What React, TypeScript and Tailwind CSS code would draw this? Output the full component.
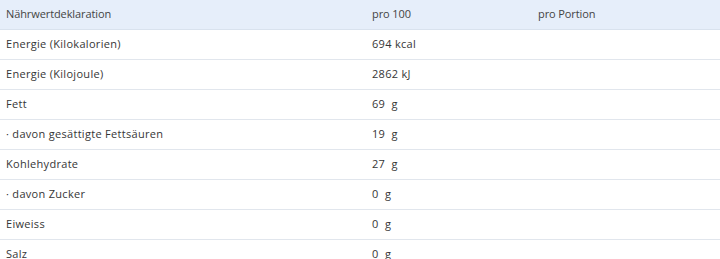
const rows: [string, string][] = [
  ["Energie (Kilokalorien)", "694 kcal"],
  ["Energie (Kilojoule)", "2862 kJ"],
  ["Fett", "69  g"],
  ["· davon gesättigte Fettsäuren", "19  g"],
  ["Kohlehydrate", "27  g"],
  ["· davon Zucker", "0  g"],
  ["Eiweiss", "0  g"],
  ["Salz", "0  g"],
];

export default function App() {
  return (
    <div
      className="w-[720px] h-[259px] overflow-hidden bg-white text-[11px] text-[#363636]"
      style={{ fontFamily: '"Open Sans", "Liberation Sans", sans-serif' }}
    >
      <div className="grid grid-cols-[366px_166px_1fr] h-[30px] items-center bg-[#e6eefa] border-b border-[#d9e2ee] text-[#444] tracking-[-0.1px]">
        <div className="px-[6px]">Nährwertdeklaration</div>
        <div className="px-[6px]">pro 100</div>
        <div className="px-[6px]">pro Portion</div>
      </div>
      {rows.map(([label, value]) => (
        <div
          key={label}
          className="grid grid-cols-[366px_166px_1fr] h-[30px] items-center border-b border-[#e1e6ed] tracking-[0.3px]"
        >
          <div className="px-[6px]">{label}</div>
          <div className="px-[6px] whitespace-pre">{value}</div>
          <div className="px-[6px]"></div>
        </div>
      ))}
    </div>
  );
}
